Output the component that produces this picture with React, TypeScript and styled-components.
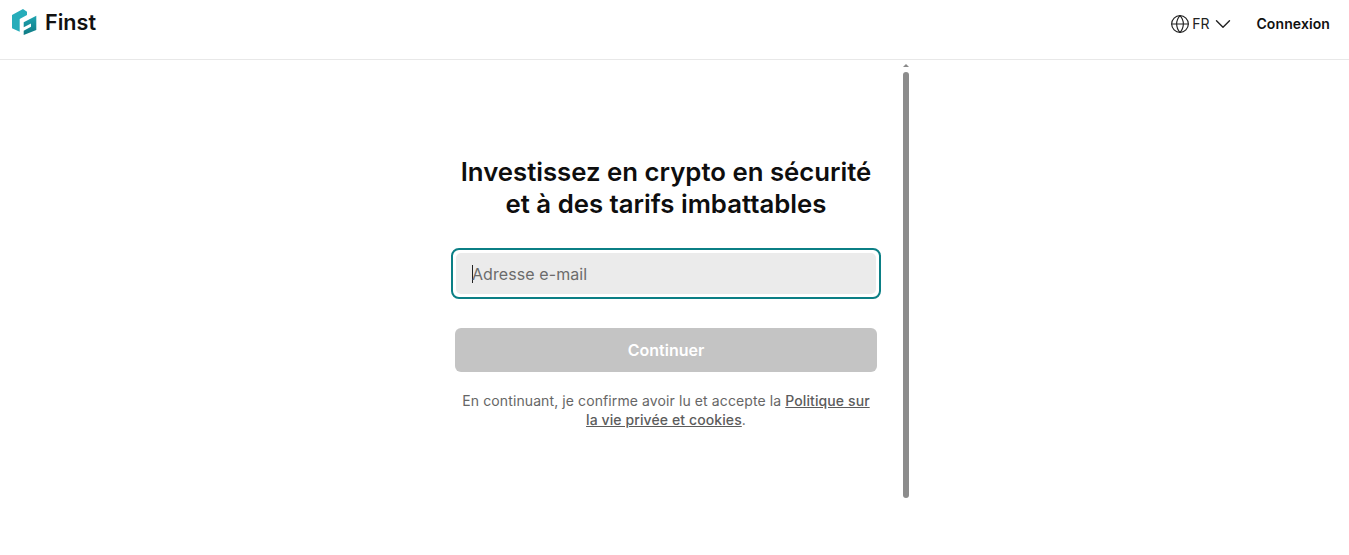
import React from 'react';
import styled, { createGlobalStyle } from 'styled-components';
import { ChevronDown, Globe } from 'lucide-react';

const GlobalStyle = createGlobalStyle`
    html, body {
        background: #fff;
        margin: 0;
        overflow: hidden;
    }
    body {
        color: #0e0e0e;
        font-family: Inter, "Liberation Sans", sans-serif;
    }
`;

const Page = styled.div`
    display: flex;
    flex-direction: column;
    height: 555px;
    width: 1349px;
`;

const Header = styled.header`
    align-items: center;
    border-bottom: 1px solid #e8e8e8;
    box-sizing: content-box;
    display: flex;
    flex: none;
    height: 47px;
    justify-content: space-between;
    padding: 0 19px 12px 12px;
`;

const Logo = styled.a`
    align-items: center;
    display: flex;
    gap: 8px;
    margin-top: -3px;
`;

const LogoName = styled.span`
    color: #111;
    font-size: 21.6px;
    font-weight: 600;
    line-height: 24px;
`;

const HeaderActions = styled.nav`
    align-items: center;
    display: flex;
    gap: 20px;
`;

const LanguageButton = styled.button`
    align-items: center;
    background: none;
    border: 0;
    color: #222;
    display: flex;
    font: 400 14px Inter, sans-serif;
    gap: 2px;
    padding: 0;

    svg:last-child {
        margin-left: -1px;
    }
`;

const LoginLink = styled.a`
    color: #111;
    font-size: 14px;
    font-weight: 600;
    letter-spacing: 0.1px;
`;

const Main = styled.main`
    display: grid;
    flex: 1;
    grid-template-columns: 423px 486px 1fr;
`;

const Pane = styled.section`
    align-items: center;
    display: flex;
    flex-direction: column;
    grid-column: 2;
    padding-top: 96px;
    position: relative;
`;

const Form = styled.form`
    display: flex;
    flex-direction: column;
    width: 422px;
`;

const Title = styled.h1`
    font-size: 25.75px;
    font-weight: 600;
    line-height: 32px;
    margin: 0 0 28px;
    text-align: center;
    white-space: nowrap;
`;

const EmailFrame = styled.div`
    border: 2px solid #0b7f85;
    border-radius: 8px;
    box-sizing: border-box;
    height: 51px;
    margin: 0 -4px 29px;
    padding: 3px;
`;

const EmailField = styled.div`
    align-items: center;
    background: #ebebeb;
    border-radius: 5px;
    color: #6b6b6b;
    display: flex;
    font-size: 16px;
    height: 100%;
    letter-spacing: 0.08px;
    padding-left: 16px;
`;

const Caret = styled.span`
    background: #222;
    height: 18px;
    margin-right: -1px;
    width: 1px;
`;

const SubmitButton = styled.button`
    background: #c4c4c4;
    border: 0;
    border-radius: 6px;
    color: #fff;
    font: 600 16px Inter, sans-serif;
    height: 44px;
    margin-bottom: 19px;
    padding: 0;
`;

const Legal = styled.p`
    color: #666;
    font-size: 14px;
    letter-spacing: 0.1px;
    line-height: 19px;
    margin: 0;
    text-align: center;
`;

const LegalLink = styled.a`
    color: #5c5c5c;
    font-weight: 450;
    text-decoration: underline;
`;

const ScrollArrow = styled.span`
    border-bottom: 3px solid #8a8a8a;
    border-left: 3px solid transparent;
    border-right: 3px solid transparent;
    height: 0;
    position: absolute;
    right: 0;
    top: 4px;
    width: 0;
`;

const ScrollThumb = styled.span`
    background: #8c8c8c;
    border-radius: 3px;
    height: 426px;
    position: absolute;
    right: 0;
    top: 12px;
    width: 6px;
`;

const FinstMark = () => (
    <svg width="25" height="26" viewBox="0 0 25 26" aria-hidden="true">
        <defs>
            <linearGradient id="finst-right" x1="0" y1="0" x2="0" y2="1">
                <stop offset="0" stopColor="#1fa5b1" />
                <stop offset="1" stopColor="#0f7a84" />
            </linearGradient>
        </defs>
        <path d="M0 6 11 0 15 2.7V6L7.7 10V22.7L0 19.3Z" fill="#27adba" />
        <path d="M11.7 13.3 24.3 6.7V21L11.7 26V21.7L19 17.7V14.5L11.7 18.3Z" fill="url(#finst-right)" />
    </svg>
);

const App = () => (
    <Page>
        <GlobalStyle />
        <Header>
            <Logo>
                <FinstMark />
                <LogoName>Finst</LogoName>
            </Logo>
            <HeaderActions>
                <LanguageButton type="button">
                    <Globe size={20} strokeWidth={1.4} />
                    FR
                    <ChevronDown size={26} strokeWidth={1.3} />
                </LanguageButton>
                <LoginLink>Connexion</LoginLink>
            </HeaderActions>
        </Header>
        <Main>
            <Pane>
                <ScrollArrow />
                <ScrollThumb />
                <Form>
                    <Title>
                        Investissez en crypto en sécurité
                        <br />
                        et à des tarifs imbattables
                    </Title>
                    <EmailFrame>
                        <EmailField>
                            <Caret />
                            Adresse e-mail
                        </EmailField>
                    </EmailFrame>
                    <SubmitButton type="button">Continuer</SubmitButton>
                    <Legal>
                        En continuant, je confirme avoir lu et accepte la <LegalLink>Politique sur</LegalLink>
                        <br />
                        <LegalLink>la vie privée et cookies</LegalLink>.
                    </Legal>
                </Form>
            </Pane>
        </Main>
    </Page>
);

export default App;
